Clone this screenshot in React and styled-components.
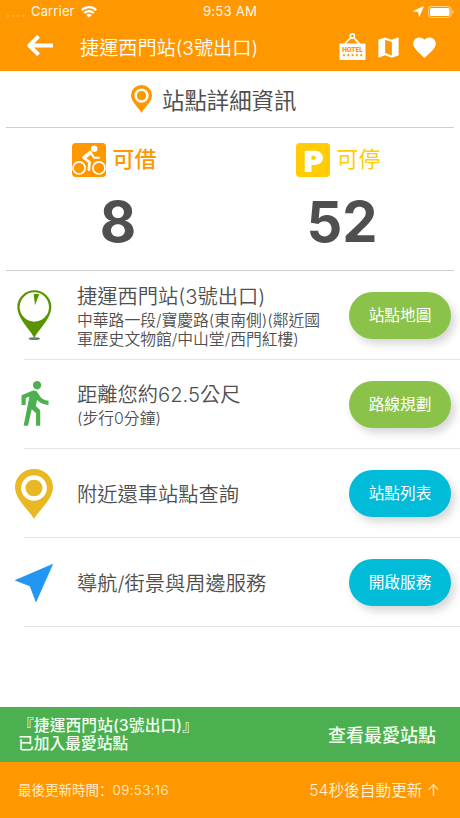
import React from "react";
import styled, { createGlobalStyle } from "styled-components";
import { MdMap, MdFavorite } from "react-icons/md";

const GlobalStyle = createGlobalStyle`
  * { box-sizing: border-box; }
  body {
    margin: 0;
    background: #fff;
    color: #4f4f4f;
    font-family: Inter, "Noto Sans CJK TC", sans-serif;
  }
  svg { display: block; flex: none; }
`;

const Screen = styled.div`
  width: 460px;
  height: 818px;
  display: flex;
  flex-direction: column;
  overflow: hidden;
`;

const Header = styled.header`
  height: 71px;
  flex: none;
  background: #ff9800;
  color: #fff;
`;

const StatusBar = styled.div`
  height: 23px;
  display: grid;
  grid-template-columns: 1fr auto 1fr;
  align-items: center;
  padding: 0 6px 0 6px;
  font-size: 13.2px;
  line-height: 23px;
  color: #fff8e8;
`;

const StatusGroup = styled.div`
  display: flex;
  align-items: center;
  gap: ${(p) => p.$gap}px;
  justify-content: ${(p) => (p.$end ? "flex-end" : "flex-start")};
`;

const Carrier = styled.span`
  font-size: 13px;
  letter-spacing: 0.15px;
`;

const Clock = styled.span`
  letter-spacing: 0.15px;
`;

const Toolbar = styled.div`
  height: 48px;
  display: flex;
  align-items: center;
  padding-left: 26px;
`;

const ToolbarTitle = styled.h1`
  margin: 0 0 0 26px;
  padding-top: 1px;
  width: 259px;
  font-size: 19.15px;
  font-weight: 350;
  line-height: 28px;
  white-space: nowrap;
`;

const ToolbarActions = styled.div`
  display: flex;
  align-items: center;
  gap: 9px;
`;

const SectionTitle = styled.h2`
  height: 57px;
  margin: 0 6px;
  padding: 0 0 1px 125px;
  display: flex;
  flex: none;
  align-items: center;
  gap: 10px;
  border-bottom: 1px solid #cfcfcf;
  font-size: 22.4px;
  font-weight: 400;
  white-space: nowrap;
`;

const Counts = styled.section`
  height: 143px;
  flex: none;
  margin: 0 6px;
  display: grid;
  grid-template-columns: 1fr 1fr;
  border-bottom: 1px solid #cfcfcf;
`;

const Count = styled.div`
  display: flex;
  flex-direction: column;
  align-items: center;
  padding-top: 14px;
`;

const CountLabel = styled.div`
  display: flex;
  align-items: center;
  gap: 6px;
  height: 36px;
  margin-right: 7px;
  font-size: 22px;
  line-height: 28px;
  font-weight: ${(p) => p.$weight};
  color: ${(p) => p.$color};
`;

const LabelText = styled.span`
  margin-bottom: 2px;
`;

const CountValue = styled.div`
  margin-top: 8px;
  font-size: 56px;
  font-weight: 650;
  line-height: 72px;
`;

const List = styled.main`
  flex: 1;
`;

const Row = styled.div`
  height: 89px;
  display: flex;
  align-items: center;
  background: linear-gradient(#e4e4e4, #e4e4e4) 24px 100% / 100% 1px no-repeat;
`;

const RowIcon = styled.div`
  width: 68px;
  display: flex;
  justify-content: center;
`;

const RowText = styled.div`
  width: 281px;
  padding: 2px 0 0 9px;
  white-space: nowrap;
`;

const RowTitle = styled.div`
  font-size: 20.25px;
  font-weight: 350;
  line-height: 26px;
`;

const RowDetail = styled.div`
  font-size: 15.8px;
  font-weight: 350;
  line-height: 18.6px;
  padding-top: 2px;
`;

const PillButton = styled.button`
  width: 102px;
  height: 47px;
  padding: 1px 0 0;
  border: 0;
  border-radius: 24px;
  background: ${(p) => p.$color};
  color: #fff;
  font: 400 15.7px/24px Inter, "Noto Sans CJK TC", sans-serif;
  box-shadow: 4px 5px 8px rgba(0, 0, 0, 0.16);
`;

const Snackbar = styled.div`
  height: 55px;
  flex: none;
  display: flex;
  align-items: center;
  justify-content: space-between;
  padding: 1px 24px 0 18px;
  background: #4caf50;
  color: #f2fff0;
`;

const SnackbarMessage = styled.div`
  font-size: 15.75px;
  font-weight: 500;
  line-height: 18.5px;
`;

const Favorite = styled.span`
  letter-spacing: 0.08px;
`;

const SnackbarAction = styled.div`
  margin-bottom: 2px;
  font-size: 18px;
  font-weight: 500;
`;

const Footer = styled.footer`
  height: 56px;
  flex: none;
  display: flex;
  align-items: center;
  justify-content: space-between;
  padding: 0 20px 0 18px;
  background: #ff9800;
  color: #fff2d9;
`;

const Updated = styled.span`
  margin-bottom: 2px;
  font-size: 13.5px;
  font-weight: 350;
`;

const Colon = styled.span`
  font-family: "Noto Sans CJK SC", sans-serif;
`;

const Time = styled.span`
  letter-spacing: 0.35px;
`;

const Countdown = styled.span`
  margin-bottom: 2px;
  font-size: 15.7px;
  font-weight: 350;
`;

const Signal = () => (
  <svg width="20" height="12" viewBox="0 0 20 12" fill="#ffac33">
    <circle cx="2" cy="10" r="1.3" />
    <circle cx="7" cy="10" r="1.3" />
    <circle cx="12" cy="10" r="1.3" />
    <circle cx="17" cy="10" r="1.3" />
  </svg>
);

const Wifi = () => (
  <svg width="16" height="12" viewBox="0 0 16 12" fill="none" stroke="#fff" strokeWidth="2.2">
    <path d="M.8 4.1a10.2 10.2 0 0 1 14.4 0" />
    <path d="M3.4 7a6.5 6.5 0 0 1 9.2 0" />
    <path d="M8 11.8 5.3 9.1a3.9 3.9 0 0 1 5.4 0Z" fill="#fff" stroke="none" />
  </svg>
);

const LocationArrow = () => (
  <svg width="11" height="11" viewBox="0 0 11 11" fill="#fff">
    <path d="M10.6.4 6.3 10.6 5.4 5.8.2 5.2Z" stroke="#fff" strokeWidth=".5" />
  </svg>
);

const Battery = () => (
  <svg width="26" height="12" viewBox="0 0 26 12">
    <rect x=".5" y=".5" width="22.5" height="11" rx="2.8" fill="none" stroke="#ffd28a" />
    <rect x="2" y="2" width="19.5" height="8" rx="1.5" fill="#fff" />
    <path d="M24.2 4v4c1-.3 1.5-1.1 1.5-2s-.5-1.7-1.5-2Z" fill="#ffd28a" />
  </svg>
);

const BackArrow = () => (
  <svg width="28" height="24" viewBox="0 0 28 24" fill="none" stroke="#fff" strokeWidth="3.9" strokeLinejoin="round">
    <path d="M3 10.5H27M12.6 1.3 3.3 10.5l9.3 9.2" />
  </svg>
);

const HotelSign = () => (
  <svg width="27" height="28" viewBox="0 0 27 28">
    <path d="M5.5 11 12 4.5M20.5 11 14.7 4.5" stroke="#fff" strokeWidth="1.7" />
    <circle cx="13.4" cy="3" r="2.1" fill="none" stroke="#fff" strokeWidth="1.6" />
    <rect x=".5" y="10.6" width="26" height="16.4" rx=".8" fill="#fff" />
    <text x="13.5" y="18.9" textAnchor="middle" fontFamily="Inter, sans-serif" fontSize="6.1" fontWeight="900" fill="#ff9800">
      HOTEL
    </text>
    <g fill="#ff9800">
      {[5, 9.3, 13.6, 17.9, 22.2].map((x) => (
        <path key={x} d={`M${x} 20.6l.5 1 1 .1-.7.8.2 1.1-1-.6-1 .6.2-1.1-.7-.8 1-.1Z`} />
      ))}
    </g>
  </svg>
);

const RingPin = ({ width, height, color }) => (
  <svg width={width} height={height} viewBox="0 0 112 150" preserveAspectRatio="none">
    <path d="M56 150C43 124 0 93 0 54a56 54 0 0 1 112 0c0 39-43 70-56 96Z" fill={color} />
    <circle cx="56" cy="57" r="31.5" fill={color} stroke="#fff" strokeWidth="13" />
  </svg>
);

const Cyclist = () => (
  <svg width="34" height="34" viewBox="0 0 101 101">
    <rect width="101" height="101" rx="11" fill="#ff9800" />
    <g fill="none" stroke="#fff">
      <circle cx="21" cy="74" r="18" strokeWidth="5" />
      <circle cx="80" cy="74" r="18" strokeWidth="5" />
      <path d="M54 29 36 43" strokeWidth="11" strokeLinejoin="round" strokeLinecap="round" />
      <path d="M36 44 52 57 50 79" strokeWidth="8" strokeLinejoin="round" strokeLinecap="round" />
      <path d="M57 31 66 44H81" strokeWidth="6" strokeLinejoin="round" strokeLinecap="round" />
    </g>
    <circle cx="66" cy="17" r="9.5" fill="#fff" />
  </svg>
);

const Parking = () => (
  <svg width="34" height="34" viewBox="0 0 101 101">
    <rect width="101" height="101" rx="11" fill="#ffcc05" />
    <path d="M26 23H54c17 0 26 8 26 21S70 65 54 65H46V86H26ZM46 38V50h5c5 0 8-2 8-6s-3-6-8-6Z" fill="#fff" fillRule="evenodd" />
  </svg>
);

const GaugePin = () => (
  <svg width="35" height="51" viewBox="0 0 105 153">
    <ellipse cx="52" cy="146" rx="17" ry="4" fill="#6d8173" />
    <path d="M52 145C43 121 1 88 1 51a51 50 0 0 1 102 0c0 37-42 70-51 94Z" fill="#579400" />
    <circle cx="52" cy="51" r="44" fill="#fff" />
    <path d="M50 12H67L54 46Z" fill="#579400" />
  </svg>
);

const Walker = () => (
  <svg width="50" height="54" viewBox="0 0 24 26" fill="#4caf50">
    <path d="M13.5 5.5c1.1 0 2-.9 2-2s-.9-2-2-2-2 .9-2 2 .9 2 2 2zM9.8 8.9L7 23h2.1l1.8-8 2.1 2v6h2v-7.5l-2.1-2 .6-3C14.8 12 16.8 13 19 13v-2c-1.9 0-3.5-1-4.3-2.4l-1-1.6c-.4-.6-1-1-1.7-1-.3 0-.5.1-.8.1L6 8.3V13h2V9.6l1.8-.7" />
  </svg>
);

const Navigate = () => (
  <svg width="38" height="38" viewBox="0 0 114 114" fill="#2196f3" stroke="#2196f3" strokeWidth="2" strokeLinejoin="round">
    <path d="M1 49 113 1 63 113 45 66Z" />
  </svg>
);

const rows = [
  {
    icon: <GaugePin />,
    title: "捷運西門站(3號出口)",
    details: ["中華路一段/寶慶路(東南側)(鄰近國", "軍歷史文物館/中山堂/西門紅樓)"],
    button: "站點地圖",
    color: "#8bc34a",
  },
  {
    icon: <Walker />,
    title: "距離您約62.5公尺",
    details: ["(步行0分鐘)"],
    button: "路線規劃",
    color: "#8bc34a",
  },
  {
    icon: <RingPin width={38} height={50} color="#e8b923" />,
    title: "附近還車站點查詢",
    details: [],
    button: "站點列表",
    color: "#00bcd8",
  },
  {
    icon: <Navigate />,
    title: "導航/街景與周邊服務",
    details: [],
    button: "開啟服務",
    color: "#00bcd8",
  },
];

export default function App() {
  return (
    <Screen lang="zh-Hant">
      <GlobalStyle />
      <Header>
        <StatusBar>
          <StatusGroup $gap={5}>
            <Signal />
            <StatusGroup $gap={6}>
              <Carrier>Carrier</Carrier>
              <Wifi />
            </StatusGroup>
          </StatusGroup>
          <Clock>9:53 AM</Clock>
          <StatusGroup $gap={4} $end>
            <LocationArrow />
            <Battery />
          </StatusGroup>
        </StatusBar>
        <Toolbar>
          <BackArrow />
          <ToolbarTitle>捷運西門站(3號出口)</ToolbarTitle>
          <ToolbarActions>
            <HotelSign />
            <MdMap size={27} />
            <MdFavorite size={27} />
          </ToolbarActions>
        </Toolbar>
      </Header>
      <SectionTitle>
        <RingPin width={21} height={28} color="#ff9800" />
        站點詳細資訊
      </SectionTitle>
      <Counts>
        <Count>
          <CountLabel $color="#ff9800" $weight={500}>
            <Cyclist />
            <LabelText>可借</LabelText>
          </CountLabel>
          <CountValue>8</CountValue>
        </Count>
        <Count>
          <CountLabel $color="#ffcc05" $weight={400}>
            <Parking />
            <LabelText>可停</LabelText>
          </CountLabel>
          <CountValue>52</CountValue>
        </Count>
      </Counts>
      <List>
        {rows.map((row) => (
          <Row key={row.title}>
            <RowIcon>{row.icon}</RowIcon>
            <RowText>
              <RowTitle>{row.title}</RowTitle>
              {row.details.length > 0 && (
                <RowDetail>
                  {row.details.map((line) => (
                    <div key={line}>{line}</div>
                  ))}
                </RowDetail>
              )}
            </RowText>
            <PillButton $color={row.color}>{row.button}</PillButton>
          </Row>
        ))}
      </List>
      <Snackbar>
        <SnackbarMessage>
          <Favorite>『捷運西門站(3號出口)』</Favorite>
          <br />
          已加入最愛站點
        </SnackbarMessage>
        <SnackbarAction>查看最愛站點</SnackbarAction>
      </Snackbar>
      <Footer>
        <Updated>
          最後更新時間<Colon lang="zh-Hans">：</Colon>
          <Time>09:53:16</Time>
        </Updated>
        <Countdown>54秒後自動更新 ↑</Countdown>
      </Footer>
    </Screen>
  );
}
